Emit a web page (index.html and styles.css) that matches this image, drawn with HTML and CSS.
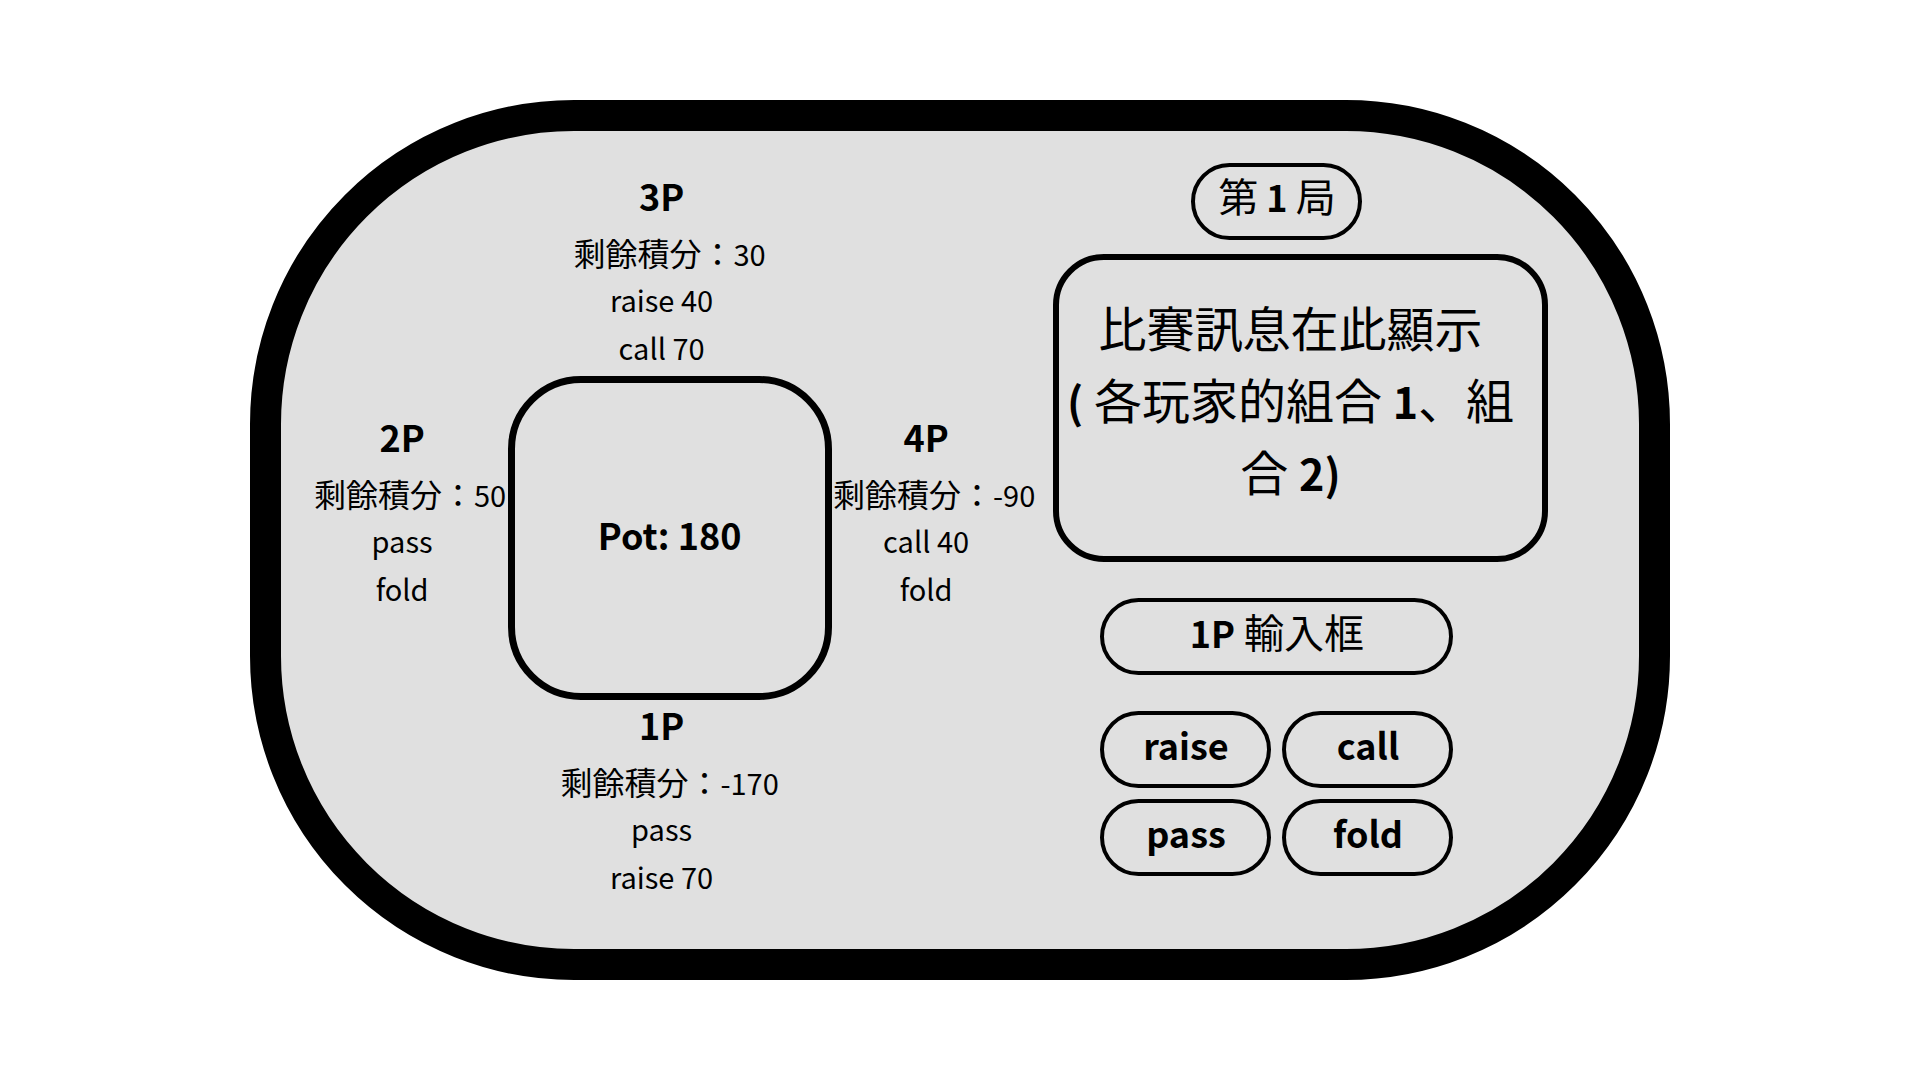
FILE: index.html
```html
<!DOCTYPE html>
<html lang="zh-Hant">
<head>
<meta charset="utf-8">
<meta name="viewport" content="width=device-width, initial-scale=1">
<title>Pot: 180</title>
<link rel="stylesheet" href="styles.css">
</head>
<body>
<main class="board">
  <div class="seats">
    <section class="player player-top">
      <h2 class="name">3P</h2>
      <p class="score">剩餘積分：<span class="latin">30</span></p>
      <p class="move">raise 40</p>
      <p class="move">call 70</p>
    </section>
    <section class="player player-left">
      <h2 class="name">2P</h2>
      <p class="score">剩餘積分：<span class="latin">50</span></p>
      <p class="move">pass</p>
      <p class="move">fold</p>
    </section>
    <div class="pot">Pot: 180</div>
    <section class="player player-right">
      <h2 class="name">4P</h2>
      <p class="score">剩餘積分：<span class="latin">-90</span></p>
      <p class="move">call 40</p>
      <p class="move">fold</p>
    </section>
    <section class="player player-bottom">
      <h2 class="name">1P</h2>
      <p class="score">剩餘積分：<span class="latin">-170</span></p>
      <p class="move">pass</p>
      <p class="move">raise 70</p>
    </section>
  </div>
  <div class="panel">
    <div class="pill round"><span>第<b class="strong"> 1 </b>局</span></div>
    <p class="message">比賽訊息在此顯示<br><b class="strong">(</b> 各玩家的組合 <b class="strong">1</b>、組合 <b class="strong">2)</b></p>
    <label class="pill entry"><span><b class="strong">1P</b> 輸入框</span><input class="entry-field" type="text"></label>
    <div class="actions">
      <button class="pill action" type="button">raise</button>
      <button class="pill action" type="button">call</button>
      <button class="pill action" type="button">pass</button>
      <button class="pill action" type="button">fold</button>
    </div>
  </div>
</main>
</body>
</html>
```
FILE: styles.css
```css
* {
  box-sizing: border-box;
}

body {
  margin: 0;
  padding: 100px 0;
  background: #fff;
  color: #000;
  font-family: "Noto Sans CJK JP", "Noto Sans", sans-serif;
  font-feature-settings: "locl" 0;
}

h2,
p {
  margin: 0;
}

.board {
  display: flex;
  gap: 16px;
  width: 74%;
  min-width: 1420px;
  margin: 0 auto;
  padding: 0 91px 0 32px;
  border: 31px solid #000;
  border-radius: 324px;
  background: #e0e0e0;
}

/* Four seats around the pot */
.seats {
  display: grid;
  grid-template-columns: 195px 324px 205px;
  grid-template-areas:
    ". top ."
    "left pot right"
    ". bottom .";
  padding: 40px 0 49px;
}

.player {
  text-align: center;
  white-space: nowrap;
}

.player-top {
  grid-area: top;
  padding-bottom: 5px;
}

.player-left {
  grid-area: left;
  padding-top: 36px;
}

.player-right {
  grid-area: right;
  padding-top: 36px;
}

.player-bottom {
  grid-area: bottom;
}

.name {
  margin-bottom: 10px;
  padding-right: 16px;
  font-size: 36px;
  line-height: 48px;
}

.score {
  font-size: 32px;
  line-height: 46px;
}

.latin {
  font-size: 29px;
  line-height: 1;
}

.move {
  padding-right: 16px;
  font-size: 29px;
  line-height: 48px;
}

.pot {
  grid-area: pot;
  display: flex;
  align-items: center;
  justify-content: center;
  height: 324px;
  padding-bottom: 8px;
  border: 7px solid #000;
  border-radius: 73px;
  font-size: 36px;
  font-weight: 700;
}

/* Round info, messages and controls */
.panel {
  flex: 1;
  display: flex;
  flex-direction: column;
  padding-top: 32px;
}

.pill {
  display: flex;
  align-items: center;
  justify-content: center;
  height: 77px;
  padding: 0 0 12px;
  border: 4px solid #000;
  border-radius: 39px;
  background: none;
  color: inherit;
  font-family: inherit;
  font-feature-settings: inherit;
  font-size: 40px;
  white-space: pre;
}

.strong {
  font-size: 36px;
  font-weight: 700;
  line-height: 1;
}

.round,
.entry,
.actions {
  align-self: center;
  margin-right: 47px;
}

.round {
  width: 171px;
  margin-bottom: 14px;
  padding-bottom: 14px;
}

.message {
  padding: 30px 20px 50px 0;
  border: 6px solid #000;
  border-radius: 51px;
  font-size: 48px;
  line-height: 72px;
  text-align: center;
}

.message .strong {
  font-size: 43px;
}

.entry {
  position: relative;
  width: 353px;
  margin-top: 36px;
  cursor: text;
}

.entry-field {
  position: absolute;
  inset: 0;
  width: 100%;
  padding: 0 32px;
  border: 0;
  border-radius: 35px;
  outline: 0;
  background: none;
  font: inherit;
  text-align: center;
}

.actions {
  display: grid;
  grid-template-columns: 171px 171px;
  gap: 11px;
  margin-top: 36px;
}

.action {
  font-size: 36px;
  font-weight: 700;
  cursor: pointer;
}
```
